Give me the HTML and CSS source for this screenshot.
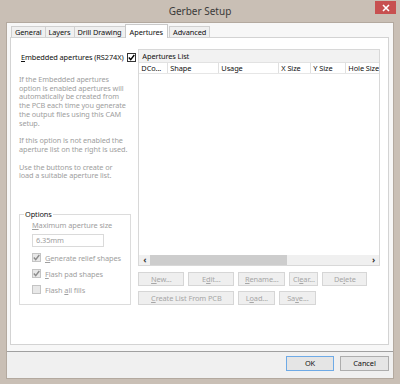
FILE: index.html
```html
<!DOCTYPE html>
<html>
<head>
<meta charset="utf-8">
<link rel="stylesheet" href="styles.css">
</head>
<body>
<div class="window">
  <div class="titlebar">
    <span></span>
    <span class="title">Gerber Setup</span>
    <span class="close"><svg width="8" height="8" viewBox="0 0 8 8"><path d="M1 1L7 7M7 1L1 7" stroke="#fff" stroke-width="1.6"/></svg></span>
  </div>
  <div class="client">
    <div class="top">
      <div class="tabs">
        <span class="tab">General</span>
        <span class="tab">Layers</span>
        <span class="tab">Drill Drawing</span>
        <span class="tab active">Apertures</span>
        <span class="tab">Advanced</span>
      </div>
      <div class="panel">
        <div class="leftcol">
          <div class="embed">
            <span class="lbl"><u>E</u>mbedded apertures (RS274X)</span>
            <span class="cb on"><svg width="7" height="7" viewBox="0 0 7 7"><path d="M0.8 3.6L2.7 5.6L6.3 1" stroke="#000" stroke-width="1.4" fill="none"/></svg></span>
          </div>
          <p class="info">If the Embedded apertures option is enabled apertures will automatically be created from the PCB each time you generate the output files using this CAM setup.</p>
          <p class="info">If this option is not enabled the aperture list on the right is used.</p>
          <p class="info">Use the buttons to create or<br>load a suitable aperture list.</p>
          <div class="group">
            <span class="legend">Options</span>
            <div class="g-lbl"><u>M</u>aximum aperture size</div>
            <div class="input">6.35mm</div>
            <div class="chk"><span class="cb dis"><svg width="7" height="7" viewBox="0 0 7 7"><path d="M0.8 3.6L2.7 5.6L6.3 1" stroke="#8c8c8c" stroke-width="1.4" fill="none"/></svg></span><span><u>G</u>enerate relief shapes</span></div>
            <div class="chk"><span class="cb dis"><svg width="7" height="7" viewBox="0 0 7 7"><path d="M0.8 3.6L2.7 5.6L6.3 1" stroke="#8c8c8c" stroke-width="1.4" fill="none"/></svg></span><span><u>F</u>lash pad shapes</span></div>
            <div class="chk"><span class="cb dis"></span><span>Flash <u>a</u>ll fills</span></div>
          </div>
        </div>
        <div class="rightcol">
          <div class="list">
            <div class="list-title">Apertures List</div>
            <div class="cols">
              <span class="c1">DCo...</span>
              <span class="c2">Shape</span>
              <span class="c3">Usage</span>
              <span class="c4">X Size</span>
              <span class="c5">Y Size</span>
              <span class="c6">Hole Size</span>
            </div>
            <div class="body"></div>
            <div class="hscroll">
              <span class="arrow">&#8249;</span>
              <div class="track"><div class="thumb"></div></div>
              <span class="arrow">&#8250;</span>
            </div>
          </div>
          <div class="btnrow first">
            <span class="btn w45"><u>N</u>ew...</span>
            <span class="btn w45">E<u>d</u>it...</span>
            <span class="btn w46"><u>R</u>ename...</span>
            <span class="btn w28">Cl<u>e</u>ar...</span>
            <span class="btn w44">De<u>l</u>ete</span>
          </div>
          <div class="btnrow">
            <span class="btn w95"><u>C</u>reate List From PCB</span>
            <span class="btn w36">L<u>o</u>ad...</span>
            <span class="btn w36">Sa<u>v</u>e...</span>
          </div>
        </div>
      </div>
    </div>
    <div class="bottom">
      <span class="dbtn ok">OK</span>
      <span class="dbtn">Cancel</span>
    </div>
  </div>
</div>
</body>
</html>
```
FILE: styles.css
```css
* { box-sizing: border-box; }
html, body { margin: 0; padding: 0; }
body {
  width: 400px;
  height: 384px;
  overflow: hidden;
  font-family: "Noto Sans", "Open Sans", sans-serif;
  font-size: 7.4px;
  letter-spacing: -0.1px;
  color: #1a1a1a;
}
u { text-decoration: underline; text-underline-offset: 1px; }
.window {
  width: 400px;
  height: 384px;
  background: #c9bfb5;
  display: flex;
  flex-direction: column;
}
.titlebar {
  height: 22px;
  display: grid;
  grid-template-columns: 1fr auto 1fr;
  align-items: start;
}
.title {
  font-size: 10px;
  letter-spacing: 0;
  color: #3a3a3a;
  line-height: 22px;
}
.close {
  justify-self: end;
  margin-right: 4px;
  margin-top: 1px;
  width: 21px;
  height: 13px;
  background: #c75050;
  display: flex;
  align-items: center;
  justify-content: center;
}
.client {
  flex: 1;
  margin: 0 6px 5px 6px;
  background: #f0f0f0;
  border: 1px solid #b3a99f;
  display: flex;
  flex-direction: column;
}
.top {
  background: #f7f7f7;
  padding: 2px 4px 6px 3px;
  border-bottom: 1px solid #a0a0a0;
  display: flex;
  flex-direction: column;
}
.tabs {
  display: flex;
  align-items: flex-end;
  height: 12px;
  padding-left: 1px;
  position: relative;
  z-index: 1;
}
.tab {
  height: 11px;
  line-height: 10px;
  padding: 0 3px;
  border: 1px solid #d0d0d0;
  border-bottom: none;
  background: #f0f0f0;
  margin-right: -1px;
  color: #111;
  white-space: nowrap;
}
.tab.active {
  height: 14px;
  line-height: 14px;
  margin: 0 1px 0 0;
  padding: 0 4px;
  background: #fff;
  border-color: #c9c9c9;
  position: relative;
  top: 1px;
}
.panel {
  height: 308px;
  background: #fff;
  border: 1px solid #d3d3d3;
  display: flex;
  padding: 11px 8px 0 8px;
  gap: 2px;
}
.leftcol {
  width: 118px;
  display: flex;
  flex-direction: column;
}
.embed {
  display: flex;
  align-items: center;
  justify-content: space-between;
  padding-left: 2px;
  height: 16px;
  white-space: nowrap;
}
.lbl { color: #111; }
.cb {
  width: 9px;
  height: 9px;
  display: flex;
  align-items: center;
  justify-content: center;
  flex: none;
}
.cb.on { border: 1px solid #333; background: #fff; }
.cb.dis { border: 1px solid #c4c4c4; background: #e8e8e8; }
.info {
  margin: 0;
  padding-top: 9px;
  color: #9e9e9e;
  line-height: 8.7px;
  width: 110px;
  font-size: 7.3px;
}
.info:first-of-type { padding-top: 10px; }
.group {
  margin-top: 34px;
  width: 112px;
  height: 91px;
  border: 1px solid #dcdcdc;
  padding: 5px 0 0 12px;
  position: relative;
}
.legend {
  position: absolute;
  top: -6px;
  left: 4px;
  background: #fff;
  padding: 0 1px;
  color: #111;
}
.g-lbl { color: #a0a0a0; line-height: 10px; }
.input {
  margin-top: 4px;
  width: 72px;
  height: 13px;
  border: 1px solid #dadada;
  color: #a0a0a0;
  padding-left: 3px;
  line-height: 11px;
}
.chk {
  display: flex;
  align-items: center;
  gap: 4px;
  color: #a0a0a0;
  height: 11px;
  margin-top: 5px;
}
.rightcol {
  flex: 1;
  display: flex;
  flex-direction: column;
}
.list {
  height: 217px;
  border: 1px solid #d8d8d8;
  display: flex;
  flex-direction: column;
}
.list-title {
  height: 13px;
  line-height: 13px;
  background: #f2f2f2;
  padding-left: 3px;
  border-bottom: 1px solid #e2e2e2;
  color: #111;
}
.cols {
  display: flex;
  height: 11px;
  line-height: 10px;
  border-bottom: 1px solid #e6e6e6;
  color: #111;
}
.cols span {
  padding-left: 2px;
  border-right: 1px solid #e0e0e0;
  white-space: nowrap;
  overflow: hidden;
}
.c1 { width: 29px; }
.c2 { width: 51px; }
.c3 { width: 60px; }
.c4 { width: 32px; }
.c5 { width: 35px; }
.c6 { flex: 1; border-right: none !important; }
.body { flex: 1; background: #fff; }
.hscroll {
  height: 10px;
  background: #f0f0f0;
  display: flex;
  align-items: center;
}
.arrow {
  width: 11px;
  text-align: center;
  font-size: 9px;
  line-height: 10px;
  color: #333;
  font-weight: bold;
}
.track { flex: 1; height: 10px; }
.thumb { width: 137px; height: 10px; background: #cdcdcd; }
.btnrow {
  display: flex;
  gap: 4px;
  margin-top: 5px;
}
.btnrow.first { margin-top: 6px; }
.btn {
  height: 14px;
  line-height: 12px;
  border: 1px solid #d6d6d6;
  background: #efefef;
  color: #a6a6a6;
  text-align: center;
  white-space: nowrap;
}
.w45 { width: 46px; }
.w46 { width: 47px; }
.w28 { width: 29px; }
.w44 { width: 45px; }
.w95 { width: 96px; }
.w36 { width: 37px; }
.bottom {
  flex: 1;
  display: flex;
  justify-content: flex-end;
  align-items: flex-start;
  gap: 6px;
  padding: 4px 4px 0 0;
}
.dbtn {
  width: 49px;
  height: 15px;
  line-height: 13px;
  text-align: center;
  border: 1px solid #adadad;
  background: #e5e5e5;
  color: #111;
}
.dbtn.ok { border-color: #6eaae6; width: 48px; }
```
